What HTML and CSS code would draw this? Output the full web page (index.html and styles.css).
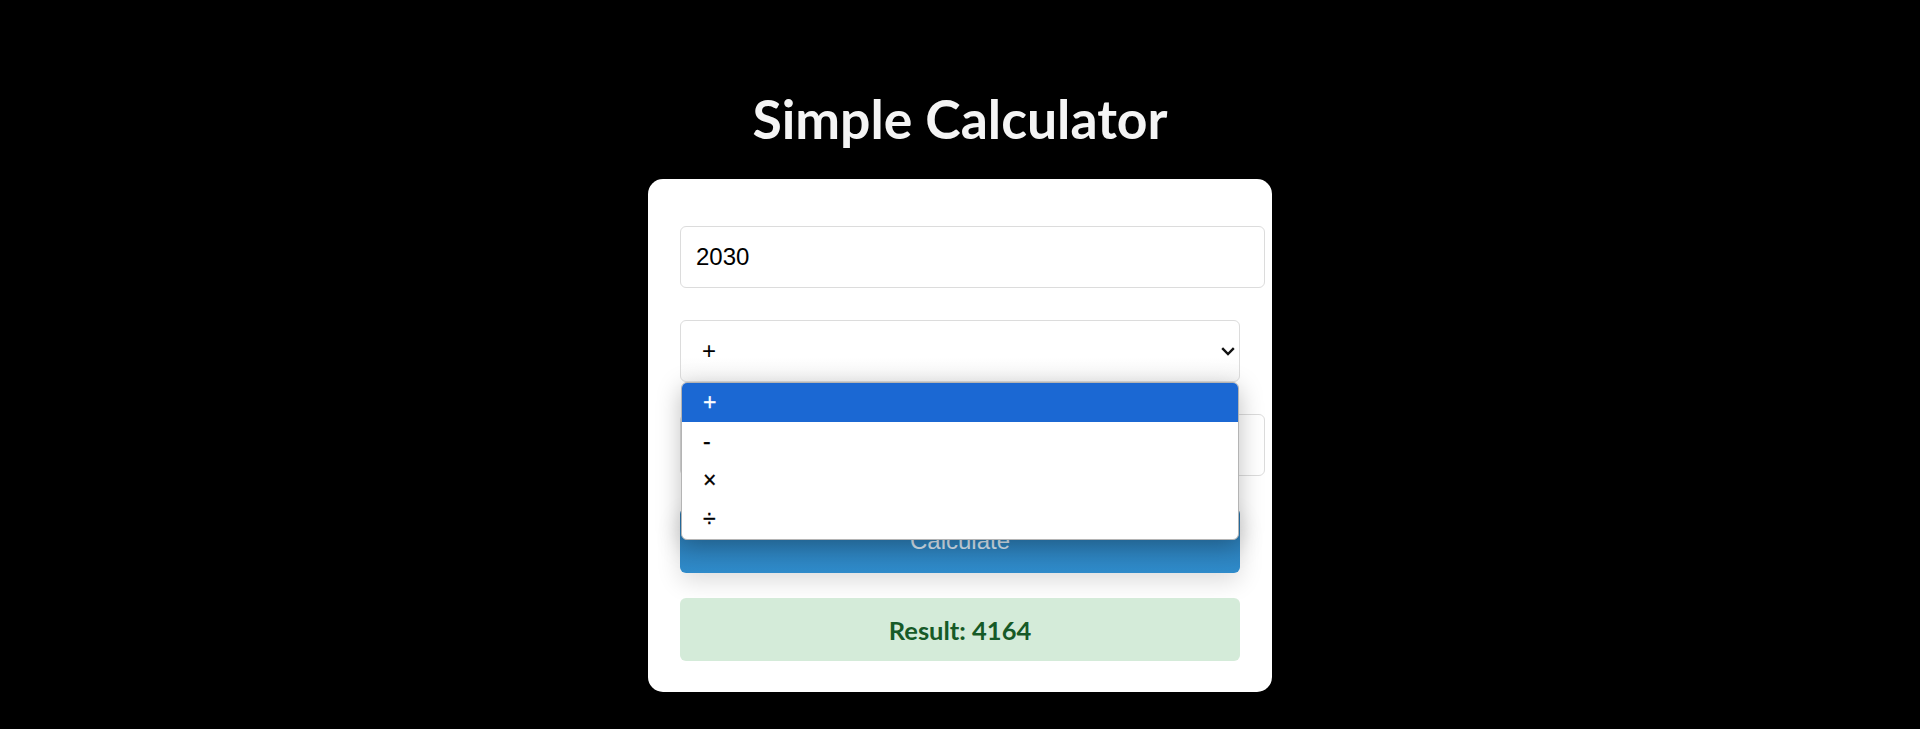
FILE: index.html
```html
<!DOCTYPE html>
<html lang="en">
<head>
<meta charset="utf-8">
<title>Simple Calculator</title>
<link rel="stylesheet" href="styles.css">
</head>
<body>
<main class="page">
  <h1 class="title">Simple Calculator</h1>
  <section class="card">
    <input class="field" type="text" value="2030">
    <div class="select-wrap">
      <div class="select">
        <span class="select-value">+</span>
        <svg class="chevron" width="14" height="9" viewBox="0 0 14 9"><path d="M1.2 1.2 L7 7 L12.8 1.2" fill="none" stroke="#111" stroke-width="2.4"/></svg>
      </div>
      <ul class="dropdown">
        <li class="option active">+</li>
        <li class="option">-</li>
        <li class="option">×</li>
        <li class="option">÷</li>
      </ul>
    </div>
    <input class="field" type="text" value="2134">
    <button class="calc">Calculate</button>
    <div class="result">Result: 4164</div>
  </section>
</main>
</body>
</html>
```
FILE: styles.css
```css
html, body {
  margin: 0;
  padding: 0;
  background: #000;
  overflow: hidden;
}
.page {
  display: flex;
  flex-direction: column;
  align-items: center;
  height: 729px;
}
.title {
  margin: 80px 0 22px;
  font-family: Lato, "Open Sans", sans-serif;
  font-weight: 700;
  font-size: 53.5px;
  line-height: 77px;
  color: #f4f4f4;
}
.card {
  width: 624px;
  box-sizing: border-box;
  background: #fff;
  border-radius: 15px;
  padding: 47px 32px 31px;
  display: flex;
  flex-direction: column;
  gap: 32px;
}
.field {
  display: block;
  width: calc(100% + 25px);
  height: 62px;
  box-sizing: border-box;
  border: 1px solid #dcdcdc;
  border-radius: 6px;
  padding: 0 15px;
  margin: 0;
  font-family: "Liberation Sans", Arial, sans-serif;
  font-size: 24px;
  color: #000;
  background: #fff;
  outline: none;
}
.select-wrap {
  position: relative;
}
.select {
  height: 62px;
  box-sizing: border-box;
  border: 1px solid #dcdcdc;
  border-radius: 6px;
  display: flex;
  align-items: center;
  justify-content: space-between;
  padding: 0 4px 0 21px;
  font-family: "Liberation Sans", Arial, sans-serif;
  font-size: 24px;
  color: #000;
  background: linear-gradient(#fff 60%, #f7f7f7);
}
.dropdown {
  position: absolute;
  top: 62px;
  left: 1px;
  right: 1px;
  margin: 0;
  padding: 0;
  list-style: none;
  background: #fff;
  border: 1px solid #b4b4b4;
  border-radius: 6px;
  box-shadow: 0 6px 24px rgba(0,0,0,0.26);
  overflow: hidden;
  z-index: 5;
}
.option {
  height: 39px;
  display: flex;
  align-items: center;
  padding-left: 21px;
  font-family: "Liberation Sans", Arial, sans-serif;
  font-size: 23px;
  -webkit-text-stroke: 0.3px currentColor;
  color: #000;
}
.option.active {
  background: #1b68d3;
  color: #fff;
}
.calc {
  display: block;
  width: 100%;
  height: 65px;
  border: 0;
  border-radius: 6px;
  background: linear-gradient(#2970a4, #2f8bca);
  color: #d4e1ec;
  font-family: "Liberation Sans", Arial, sans-serif;
  font-size: 24px;
  box-shadow: 0 8px 24px rgba(0,0,0,0.14);
  margin: 0;
  padding: 0;
}
.result {
  height: 63px;
  margin-top: -7px;
  border-radius: 6px;
  background: #d4ebd9;
  color: #165a27;
  display: flex;
  align-items: center;
  justify-content: center;
  font-family: Lato, "Open Sans", sans-serif;
  font-weight: 700;
  font-size: 25.5px;
}
```
